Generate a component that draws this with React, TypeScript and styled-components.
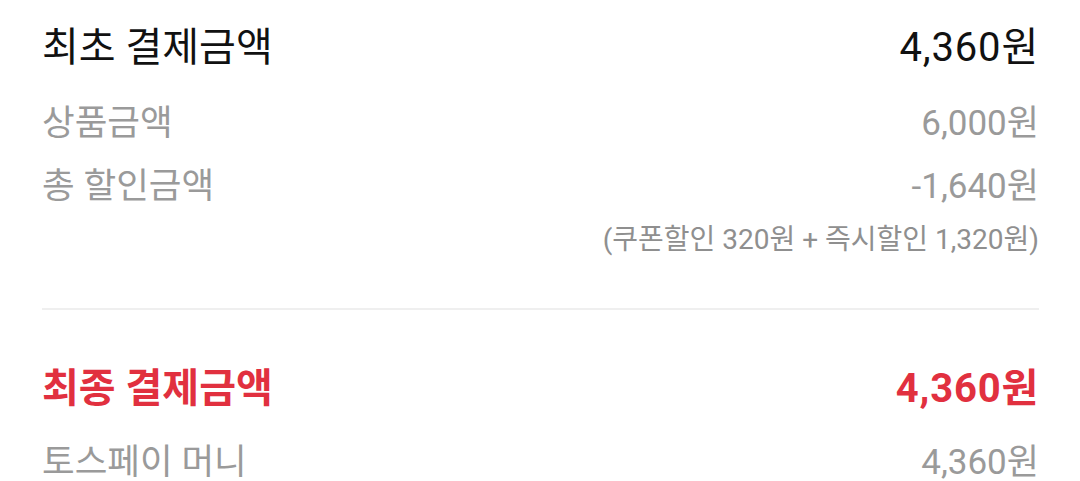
import styled, { createGlobalStyle } from 'styled-components';

const GlobalStyle = createGlobalStyle`
  html, body {
    margin: 0;
    padding: 0;
    background: #ffffff;
  }
  body {
    font-family: Roboto, "Noto Sans CJK KR", sans-serif;
  }
`;

const Page = styled.div`
  width: 1080px;
  height: 481px;
  overflow: hidden;
  padding: 16px 41px 0 42px;
  box-sizing: border-box;
  background: #ffffff;
`;

const Section = styled.section`
  display: flex;
  flex-direction: column;
`;

const Row = styled.div<{ $gap?: number; $height?: number }>`
  display: flex;
  justify-content: space-between;
  align-items: center;
  height: ${({ $height }) => $height ?? 50}px;
  margin-top: ${({ $gap }) => $gap ?? 0}px;
`;

const Label = styled.span<{ $tone: 'title' | 'muted' | 'accent' }>`
  font-size: ${({ $tone }) => ($tone === 'muted' ? 35.5 : 40)}px;
  font-weight: ${({ $tone }) => ($tone === 'accent' ? 700 : 400)};
  color: ${({ $tone }) =>
    $tone === 'title' ? '#111111' : $tone === 'accent' ? '#e1303f' : '#9a9a9a'};
  white-space: nowrap;
`;

const Amount = styled(Label)`
  font-size: ${({ $tone }) => ($tone === 'muted' ? 35 : 40)}px;
  letter-spacing: ${({ $tone }) => ($tone === 'muted' ? 0 : 0.8)}px;
`;

const Note = styled.div`
  display: flex;
  justify-content: flex-end;
  align-items: center;
  height: 36px;
  margin-top: 12px;
  font-size: 28px;
  color: #8f8f8f;
  white-space: nowrap;
`;

const Divider = styled.hr`
  border: none;
  height: 2px;
  background: #efefef;
  margin: 53px 0 0 0;
`;

const App = () => {
  const details = [
    { label: '상품금액', amount: '6,000원' },
    { label: '총 할인금액', amount: '-1,640원' }
  ];

  return (
    <>
      <GlobalStyle />
      <Page>
        <Section>
          <Row $height={56}>
            <Label $tone="title">최초 결제금액</Label>
            <Amount $tone="title">4,360원</Amount>
          </Row>
          {details.map((item, index) => (
            <Row key={item.label} $gap={index === 0 ? 22 : 13}>
              <Label $tone="muted">{item.label}</Label>
              <Amount $tone="muted">{item.amount}</Amount>
            </Row>
          ))}
          <Note>(쿠폰할인 320원 + 즉시할인 1,320원)</Note>
        </Section>
        <Divider />
        <Section>
          <Row $height={56} $gap={47}>
            <Label $tone="accent">최종 결제금액</Label>
            <Amount $tone="accent">4,360원</Amount>
          </Row>
          <Row $gap={20}>
            <Label $tone="muted">토스페이 머니</Label>
            <Amount $tone="muted">4,360원</Amount>
          </Row>
        </Section>
      </Page>
    </>
  );
};

export default App;
